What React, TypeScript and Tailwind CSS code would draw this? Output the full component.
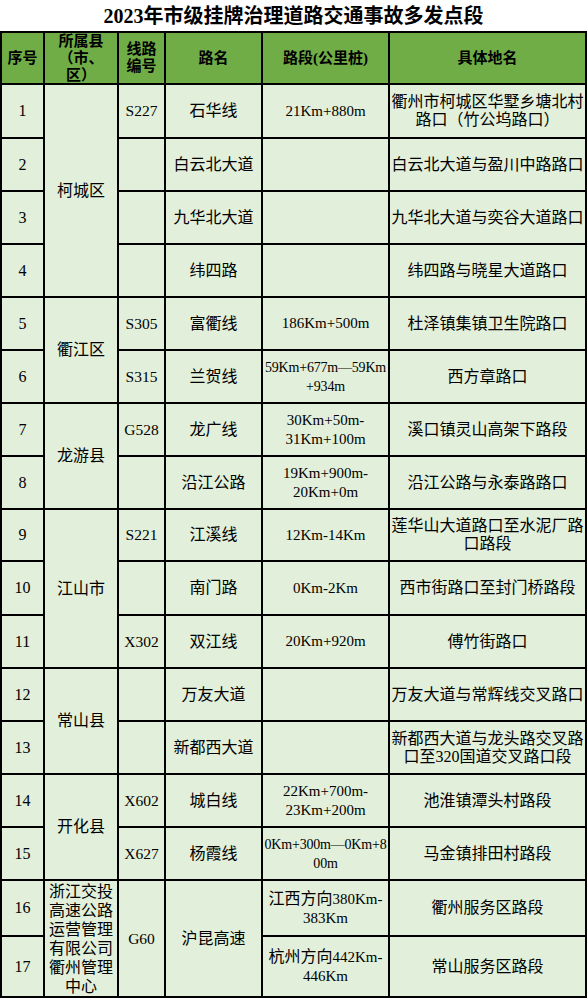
import React from "react";

type CP = { children?: React.ReactNode; className?: string };

function H({ children, className = "" }: CP) {
  return (
    <div
      className={
        "flex items-center justify-center text-center bg-[#70ad47] font-bold text-[15px] leading-[17px] text-black " +
        className
      }
    >
      <div>{children}</div>
    </div>
  );
}

function C({ children, className = "" }: CP) {
  return (
    <div
      className={
        "flex items-center justify-center text-center bg-[#e2efda] text-black overflow-visible " +
        className
      }
    >
      <div className="whitespace-nowrap">{children}</div>
    </div>
  );
}

function N({ children }: CP) {
  return <C className="text-[16px]">{children}</C>;
}
function Code({ children, className = "" }: CP) {
  return <C className={"text-[15.5px] " + className}>{children}</C>;
}
function Road({ children, className = "" }: CP) {
  return <C className={"text-[16px] " + className}>{children}</C>;
}
function Seg({ children, className = "text-[15px]" }: CP) {
  return <C className={"leading-[19px] " + className}>{children}</C>;
}
function Place({ children }: CP) {
  return <C className="text-[16px] leading-[18px]">{children}</C>;
}

export default function App() {
  return (
    <div className="w-[587px] bg-white text-black [font-family:'Liberation_Serif','Noto_Sans_CJK_SC',serif]">
      <div className="h-[31px] flex items-center justify-center text-[20px] font-bold leading-none">
        2023年市级挂牌治理道路交通事故多发点段
      </div>
      <div className="grid bg-black p-[2px] gap-[2px] grid-cols-[41px_72px_45px_95px_125px_195px] grid-rows-[50px_52px_51px_51px_51px_51px_51px_51px_51px_50px_52px_51px_51px_51px_51px_51px_54px_59px]">
        <H>序号</H>
        <H>
          所属县
          <br />（市、
          <br />区）
        </H>
        <H>
          线路
          <br />
          编号
        </H>
        <H>路名</H>
        <H>路段(公里桩)</H>
        <H>具体地名</H>

        {/* 1 */}
        <N>1</N>
        <Road className="row-span-4">柯城区</Road>
        <Code>S227</Code>
        <Road>石华线</Road>
        <Seg>21Km+880m</Seg>
        <Place>
          衢州市柯城区华墅乡塘北村
          <br />
          路口（竹公坞路口）
        </Place>

        {/* 2 */}
        <N>2</N>
        <Code></Code>
        <Road>白云北大道</Road>
        <Seg></Seg>
        <Place>白云北大道与盈川中路路口</Place>

        {/* 3 */}
        <N>3</N>
        <Code></Code>
        <Road>九华北大道</Road>
        <Seg></Seg>
        <Place>九华北大道与奕谷大道路口</Place>

        {/* 4 */}
        <N>4</N>
        <Code></Code>
        <Road>纬四路</Road>
        <Seg></Seg>
        <Place>纬四路与晓星大道路口</Place>

        {/* 5 */}
        <N>5</N>
        <Road className="row-span-2">衢江区</Road>
        <Code>S305</Code>
        <Road>富衢线</Road>
        <Seg>186Km+500m</Seg>
        <Place>杜泽镇集镇卫生院路口</Place>

        {/* 6 */}
        <N>6</N>
        <Code>S315</Code>
        <Road>兰贺线</Road>
        <Seg className="text-[14px] tracking-[-0.2px]">
          59Km+677m—59Km
          <br />
          +934m
        </Seg>
        <Place>西方章路口</Place>

        {/* 7 */}
        <N>7</N>
        <Road className="row-span-2">龙游县</Road>
        <Code>G528</Code>
        <Road>龙广线</Road>
        <Seg>
          30Km+50m-
          <br />
          31Km+100m
        </Seg>
        <Place>溪口镇灵山高架下路段</Place>

        {/* 8 */}
        <N>8</N>
        <Code></Code>
        <Road>沿江公路</Road>
        <Seg>
          19Km+900m-
          <br />
          20Km+0m
        </Seg>
        <Place>沿江公路与永泰路路口</Place>

        {/* 9 */}
        <N>9</N>
        <Road className="row-span-3">江山市</Road>
        <Code>S221</Code>
        <Road>江溪线</Road>
        <Seg>12Km-14Km</Seg>
        <Place>
          莲华山大道路口至水泥厂路
          <br />
          口路段
        </Place>

        {/* 10 */}
        <N>10</N>
        <Code></Code>
        <Road>南门路</Road>
        <Seg>0Km-2Km</Seg>
        <Place>西市街路口至封门桥路段</Place>

        {/* 11 */}
        <N>11</N>
        <Code>X302</Code>
        <Road>双江线</Road>
        <Seg>20Km+920m</Seg>
        <Place>傅竹街路口</Place>

        {/* 12 */}
        <N>12</N>
        <Road className="row-span-2">常山县</Road>
        <Code></Code>
        <Road>万友大道</Road>
        <Seg></Seg>
        <Place>万友大道与常辉线交叉路口</Place>

        {/* 13 */}
        <N>13</N>
        <Code></Code>
        <Road>新都西大道</Road>
        <Seg></Seg>
        <Place>
          新都西大道与龙头路交叉路
          <br />
          口至320国道交叉路口段
        </Place>

        {/* 14 */}
        <N>14</N>
        <Road className="row-span-2">开化县</Road>
        <Code>X602</Code>
        <Road>城白线</Road>
        <Seg>
          22Km+700m-
          <br />
          23Km+200m
        </Seg>
        <Place>池淮镇潭头村路段</Place>

        {/* 15 */}
        <N>15</N>
        <Code>X627</Code>
        <Road>杨霞线</Road>
        <Seg className="text-[14px] tracking-[-0.2px]">
          0Km+300m—0Km+8
          <br />
          00m
        </Seg>
        <Place>马金镇排田村路段</Place>

        {/* 16 */}
        <N>16</N>
        <C className="row-span-2 text-[16px] leading-[19px]">
          浙江交投
          <br />
          高速公路
          <br />
          运营管理
          <br />
          有限公司
          <br />
          衢州管理
          <br />
          中心
        </C>
        <Code className="row-span-2">G60</Code>
        <Road className="row-span-2">沪昆高速</Road>
        <Seg>
          <span className="text-[16px]">江西方向</span>380Km-
          <br />
          383Km
        </Seg>
        <Place>衢州服务区路段</Place>

        {/* 17 */}
        <N>17</N>
        <Seg>
          <span className="text-[16px]">杭州方向</span>442Km-
          <br />
          446Km
        </Seg>
        <Place>常山服务区路段</Place>
      </div>
    </div>
  );
}
